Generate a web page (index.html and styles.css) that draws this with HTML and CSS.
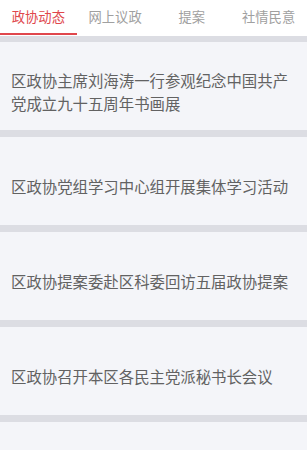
FILE: index.html
```html
<!doctype html>
<html>
<head>
    <meta charset="utf-8">
    <title>政协动态</title>
    <link rel="stylesheet" href="styles.css">
</head>
<body>
    <div class="tabs">
        <div class="tab active">政协动态</div>
        <div class="tab">网上议政</div>
        <div class="tab">提案</div>
        <div class="tab">社情民意</div>
    </div>
    <div class="news-list">
        <div class="news-item">区政协主席刘海涛一行参观纪念中国共产党成立九十五周年书画展</div>
        <div class="news-item">区政协党组学习中心组开展集体学习活动</div>
        <div class="news-item">区政协提案委赴区科委回访五届政协提案</div>
        <div class="news-item">区政协召开本区各民主党派秘书长会议</div>
        <div class="news-item"></div>
    </div>
</body>
</html>
```

FILE: styles.css
```css
html, body {
    margin: 0;
    padding: 0;
    height: 450px;
    overflow: hidden;
}
body {
    background-color: #dcdde3;
    font-family: "Noto Sans CJK SC", "Noto Sans", sans-serif;
}
/* Top tab bar */
.tabs {
    display: flex;
    height: 36px;
    background-color: #fff;
}
.tab {
    flex: 1;
    text-align: center;
    font-size: 13.3px;
    line-height: 34px;
    color: #a0a0a0;
    box-sizing: border-box;
    border-bottom: 2px solid transparent;
    height: 35px;
}
.tab.active {
    color: #e0474c;
    border-bottom-color: #e0474c;
}
/* News cards */
.news-list {
    display: flex;
    flex-direction: column;
    gap: 7px;
    padding-top: 6px;
}
.news-item {
    display: flex;
    align-items: center;
    box-sizing: border-box;
    height: 88px;
    padding: 11px 11px 0 11px;
    background-color: #f4f5f9;
    color: #626262;
    font-size: 15.4px;
    line-height: 23px;
}
```
